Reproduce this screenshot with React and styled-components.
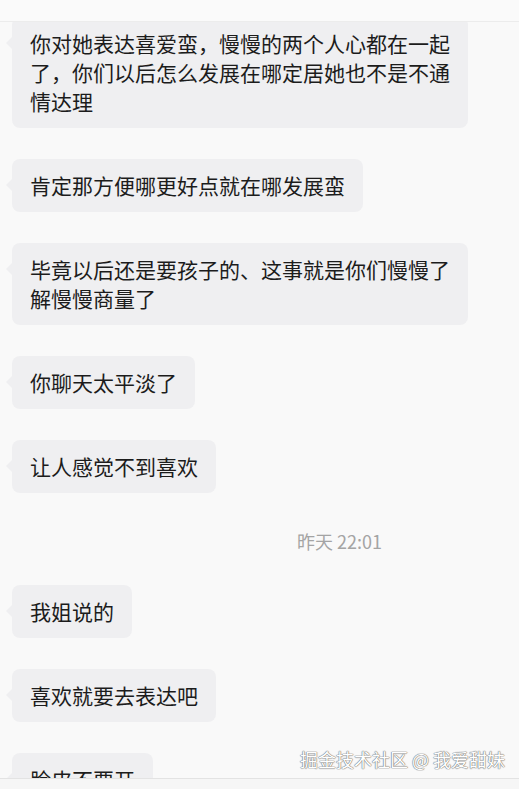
import React from "react";
import styled, { createGlobalStyle } from "styled-components";

const GlobalStyle = createGlobalStyle`
  html, body {
    margin: 0;
    padding: 0;
    background: #f9f9f9;
  }
  body {
    font-family: "Noto Sans CJK SC", "Noto Sans", sans-serif;
    -webkit-font-smoothing: antialiased;
  }
`;

const messages = [
  { type: "msg", text: "你对她表达喜爱蛮，慢慢的两个人心都在一起了，你们以后怎么发展在哪定居她也不是不通情达理" },
  { type: "msg", text: "肯定那方便哪更好点就在哪发展蛮" },
  { type: "msg", text: "毕竟以后还是要孩子的、这事就是你们慢慢了解慢慢商量了" },
  { type: "msg", text: "你聊天太平淡了" },
  { type: "msg", text: "让人感觉不到喜欢" },
  { type: "time", text: "昨天 22:01" },
  { type: "msg", text: "我姐说的" },
  { type: "msg", text: "喜欢就要去表达吧" },
  { type: "msg", text: "脸皮不要开" },
];

export default function App() {
  return (
    <>
      <GlobalStyle />
      <Window>
        <TopBar />
        <ChatArea>
          <MessageList>
            {messages.map((m, i) =>
              m.type === "time" ? (
                <TimeRow key={i}>{m.text}</TimeRow>
              ) : (
                <Row key={i}>
                  <Bubble>{m.text}</Bubble>
                </Row>
              )
            )}
          </MessageList>
        </ChatArea>
        <BottomBar />
        <Watermark>掘金技术社区 @ 我爱甜妹</Watermark>
      </Window>
    </>
  );
}

const Window = styled.div`
  position: relative;
  height: 789px;
  display: flex;
  flex-direction: column;
  background: #f9f9f9;
  overflow: hidden;
`;
const TopBar = styled.div`
  height: 21px;
  flex-shrink: 0;
  background: #fafafa;
  border-bottom: 1px solid #ececec;
  position: relative;
  z-index: 1;
`;
const ChatArea = styled.div`
  flex: 1;
  overflow: hidden;
`;
const MessageList = styled.div`
  display: flex;
  flex-direction: column;
  gap: 31px;
  margin-top: -5px;
  padding-left: 12px;
`;
const Row = styled.div`
  display: flex;
`;
const Bubble = styled.div`
  position: relative;
  box-sizing: border-box;
  max-width: 456px;
  padding: 12px 18px;
  background: #efeff1;
  border-radius: 8px;
  color: #1c1c1c;
  font-size: 21px;
  line-height: 29px;
  &::before {
    content: "";
    position: absolute;
    left: -6px;
    top: 20px;
    border-top: 6px solid transparent;
    border-bottom: 6px solid transparent;
    border-right: 6px solid #efeff1;
  }
`;
const TimeRow = styled.div`
  box-sizing: border-box;
  padding: 5px 0 0 148px;
  text-align: center;
  color: #a4a4a4;
  font-size: 18px;
  line-height: 25px;
`;
const BottomBar = styled.div`
  height: 10px;
  flex-shrink: 0;
  background: #f6f6f6;
  border-top: 1px solid #e3e3e3;
  position: relative;
  z-index: 1;
`;
const Watermark = styled.div`
  position: absolute;
  right: 14px;
  bottom: 17px;
  z-index: 2;
  color: #ffffff;
  font-size: 18px;
  line-height: 26px;
  text-shadow: 0 0 1px #777, 0 0 1px #777, 0 0 1px #777;
`;
